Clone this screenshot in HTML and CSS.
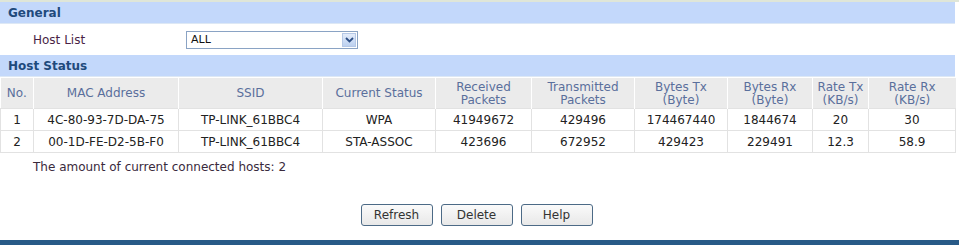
FILE: index.html
```html
<!DOCTYPE html>
<html lang="en">
<head>
    <meta charset="UTF-8">
    <title>Host Status</title>
    <link rel="stylesheet" href="styles.css">
</head>
<body>
    <div class="page">
        <div class="section-title">General</div>
        <div class="form-row">
            <span class="label">Host List</span>
            <div class="select">
                <span>ALL</span>
                <span class="arrow">
                    <svg width="9" height="6" viewBox="0 0 9 6"><path d="M1 1 L4.5 4.5 L8 1" fill="none" stroke="#2d4f86" stroke-width="1.8"/></svg>
                </span>
            </div>
        </div>
        <div class="section-title">Host Status</div>

        <table class="hosts">
            <colgroup>
                <col style="width:33px">
                <col style="width:145px">
                <col style="width:144px">
                <col style="width:113px">
                <col style="width:96px">
                <col style="width:103px">
                <col style="width:93px">
                <col style="width:85px">
                <col style="width:56px">
                <col style="width:87px">
            </colgroup>
            <thead>
                <tr>
                    <th>No.</th>
                    <th>MAC Address</th>
                    <th>SSID</th>
                    <th>Current Status</th>
                    <th>Received<br>Packets</th>
                    <th>Transmitted<br>Packets</th>
                    <th>Bytes Tx<br>(Byte)</th>
                    <th>Bytes Rx<br>(Byte)</th>
                    <th>Rate Tx<br>(KB/s)</th>
                    <th>Rate Rx<br>(KB/s)</th>
                </tr>
            </thead>
            <tbody>
                <tr>
                    <td>1</td>
                    <td>4C-80-93-7D-DA-75</td>
                    <td>TP-LINK_61BBC4</td>
                    <td>WPA</td>
                    <td>41949672</td>
                    <td>429496</td>
                    <td>174467440</td>
                    <td>1844674</td>
                    <td>20</td>
                    <td>30</td>
                </tr>
                <tr>
                    <td>2</td>
                    <td>00-1D-FE-D2-5B-F0</td>
                    <td>TP-LINK_61BBC4</td>
                    <td>STA-ASSOC</td>
                    <td>423696</td>
                    <td>672952</td>
                    <td>429423</td>
                    <td>229491</td>
                    <td>12.3</td>
                    <td>58.9</td>
                </tr>
            </tbody>
        </table>

        <p class="summary">The amount of current connected hosts: 2</p>

        <div class="buttons">
            <button>Refresh</button>
            <button>Delete</button>
            <button>Help</button>
        </div>
        <div class="footer-bar"></div>
    </div>
</body>
</html>
```

FILE: styles.css
```css
:root {
    --band: #c3d8fb;
    --title: #1f4a7c;
    --head-bg: #ebebeb;
    --head-text: #5a6f9c;
    --text: #222;
    --label: #4a1f46;
}

body {
    margin: 0;
    background: #fff;
    font-family: 'DejaVu Sans', Verdana, sans-serif;
    font-size: 12px;
    color: var(--text);
}

.page {
    width: 959px;
    height: 245px;
    border-top: 2px solid #dfe6d8;
    box-sizing: border-box;
    display: flex;
    flex-direction: column;
}

.section-title {
    width: 955px;
    height: 22px;
    line-height: 22px;
    background: var(--band);
    color: var(--title);
    font-weight: bold;
    font-size: 12px;
    padding-left: 8px;
    box-sizing: border-box;
    border-bottom: 1px solid #dde8f5;
}

.form-row {
    height: 31px;
    display: flex;
    align-items: center;
}

.label {
    width: 153px;
    padding-left: 33px;
    color: var(--label);
}

.select {
    width: 172px;
    height: 18px;
    border: 1px solid #8aa3c4;
    box-sizing: border-box;
    display: flex;
    align-items: center;
    justify-content: space-between;
    padding-left: 4px;
    color: #111;
    font-size: 11px;
}

.arrow {
    width: 14px;
    height: 14px;
    margin-right: 1px;
    background: linear-gradient(#e3ecfb, #bcd0ef);
    border: 1px solid #b5c8e6;
    box-sizing: border-box;
    display: flex;
    align-items: center;
    justify-content: center;
}

.hosts {
    width: 955px;
    border-collapse: collapse;
    table-layout: fixed;
    margin-top: 1px;
}

.hosts th {
    background: var(--head-bg);
    color: var(--head-text);
    font-weight: normal;
    height: 29px;
    line-height: 13px;
    padding: 1px 0 0;
    border-left: 1px solid #fff;
    vertical-align: middle;
}

.hosts th:first-child {
    border-left: none;
}

.hosts td {
    height: 21px;
    padding: 0;
    text-align: center;
    border: 1px solid #e2e2e2;
    color: var(--text);
}

.summary {
    margin: 7px 0 0 33px;
    color: #3a2a3c;
}

.buttons {
    display: flex;
    justify-content: center;
    gap: 8px;
    margin-top: 30px;
    padding-right: 6px;
}

.buttons button {
    width: 72px;
    height: 22px;
    font-family: inherit;
    font-size: 12px;
    color: #333;
    background: linear-gradient(#fafafa, #e8e8e8);
    border: 1px solid #4c6a86;
    border-radius: 3px;
    padding: 0;
}

.footer-bar {
    margin-top: auto;
    height: 5px;
    background: #285a87;
}
```
